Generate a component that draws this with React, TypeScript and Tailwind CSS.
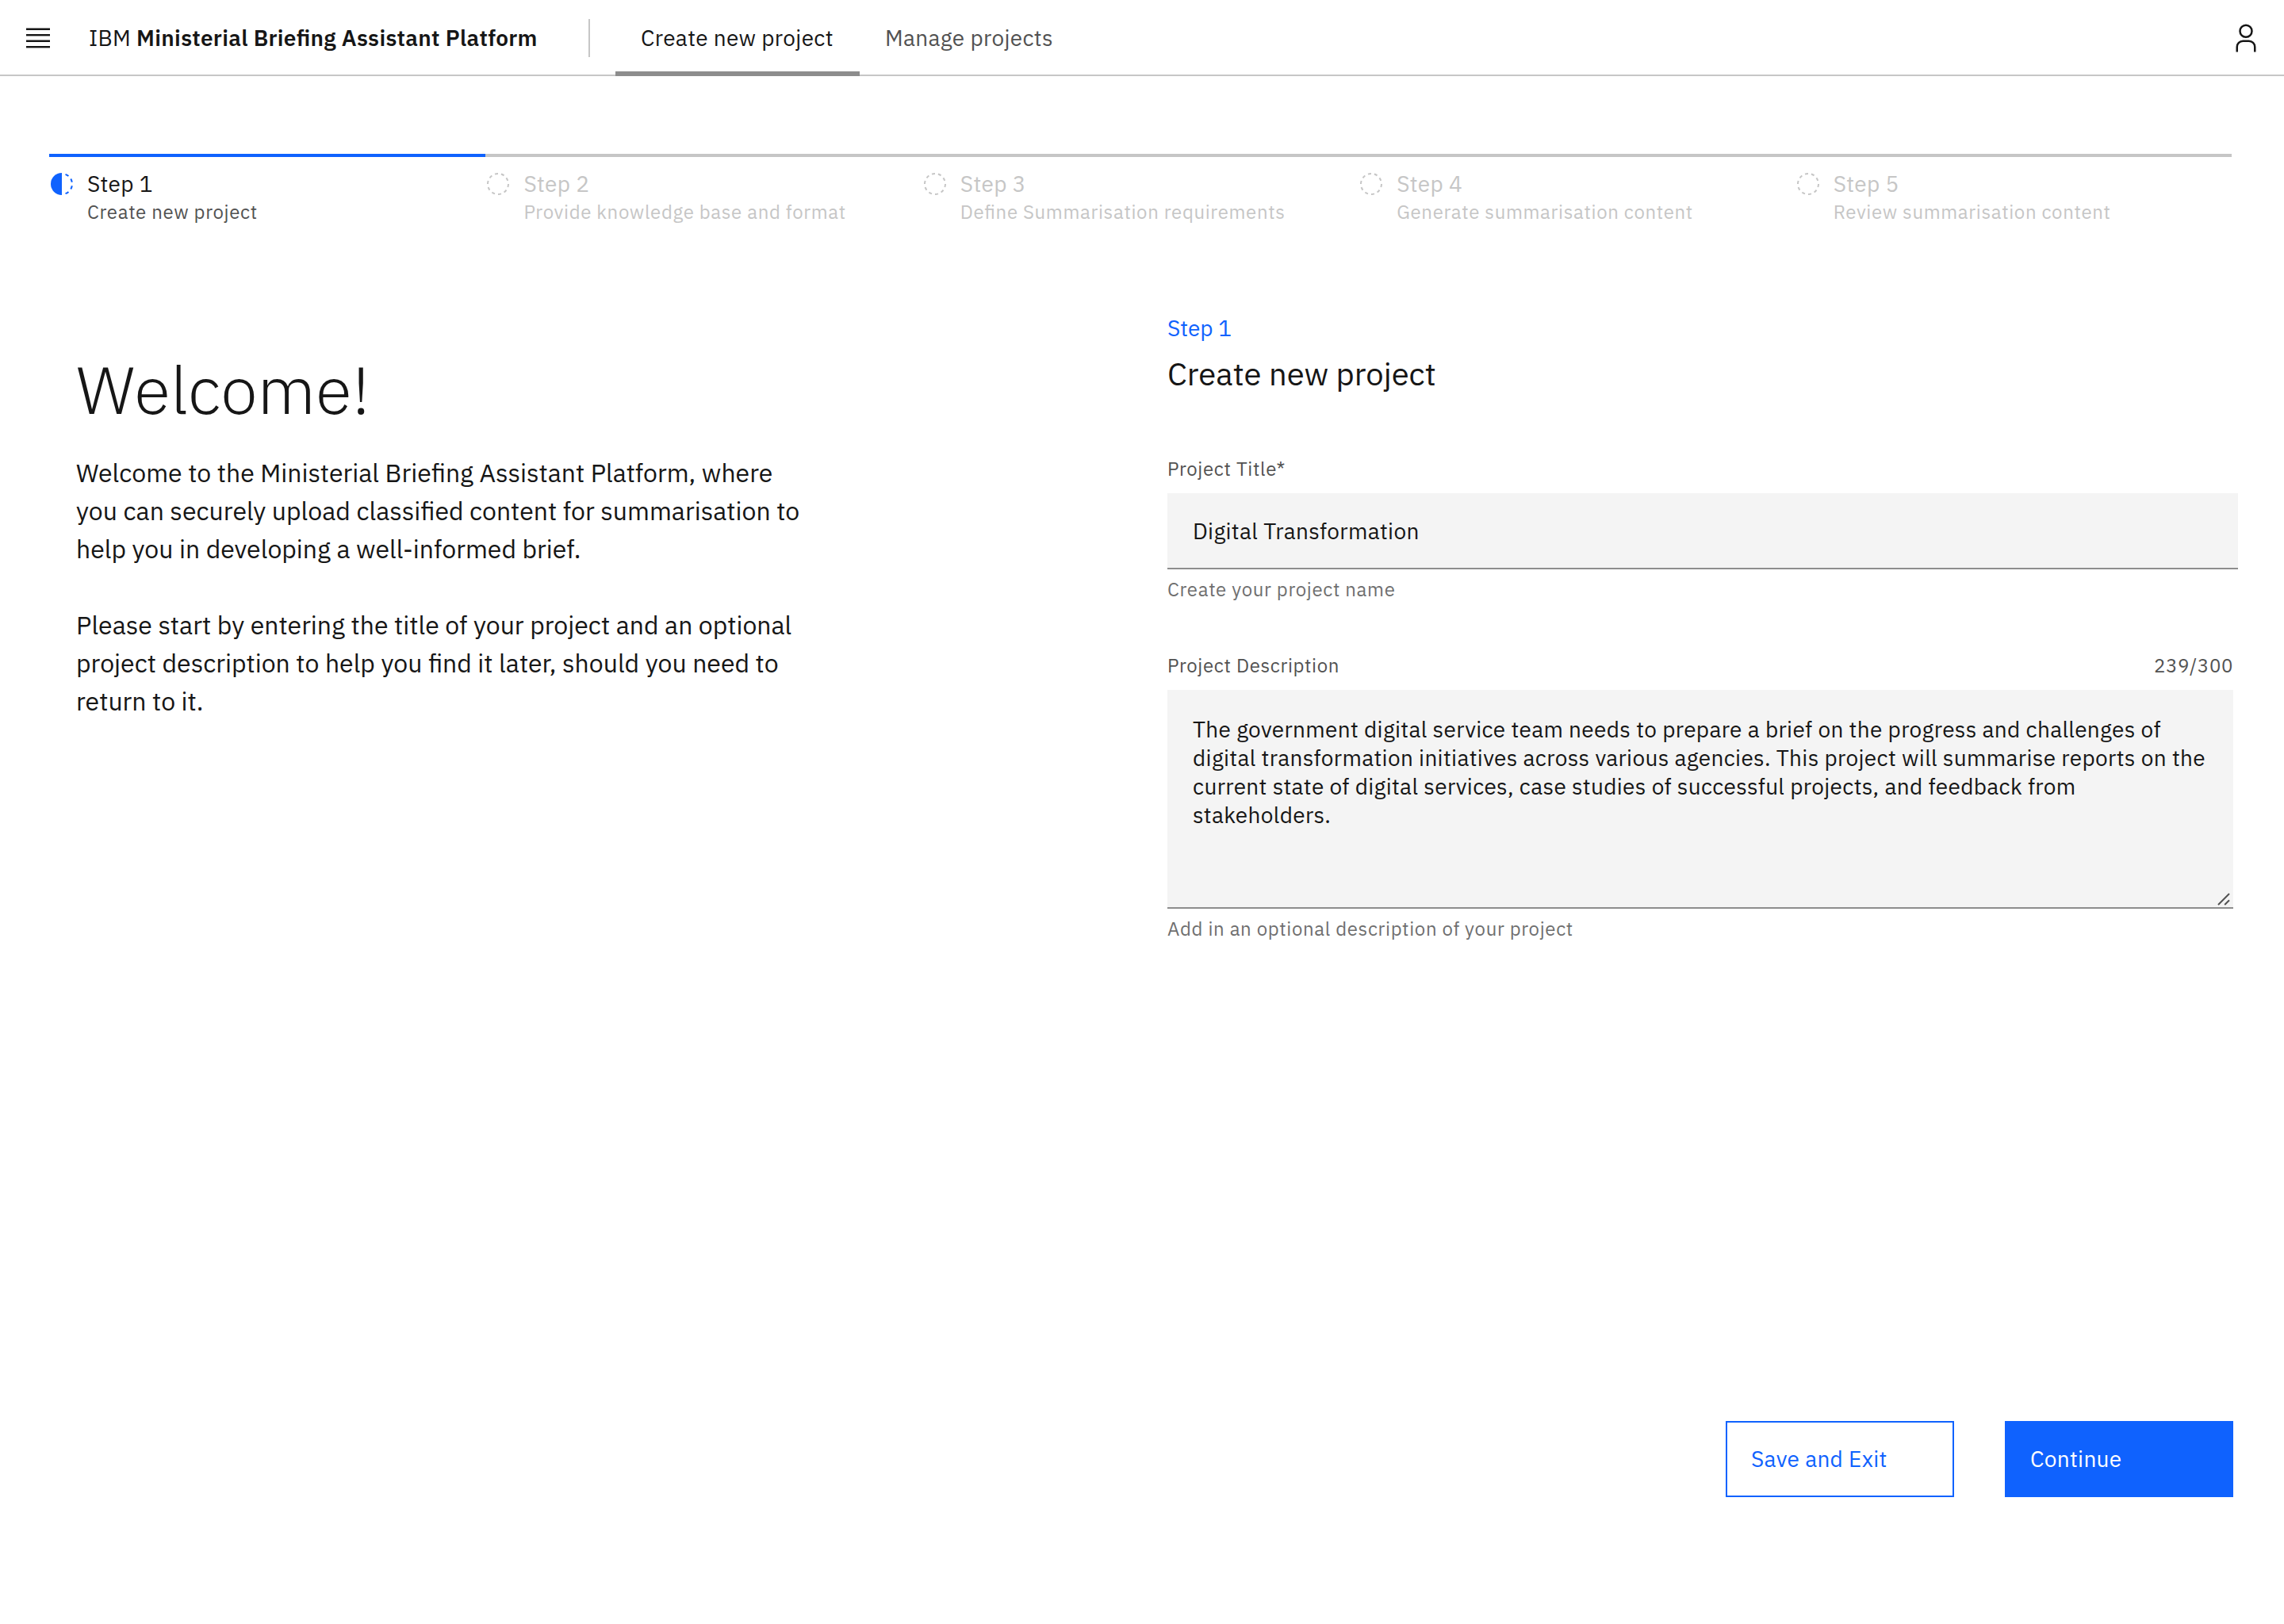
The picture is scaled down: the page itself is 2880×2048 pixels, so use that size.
const intro = [
  "Welcome to the Ministerial Briefing Assistant Platform, where",
  "you can securely upload classified content for summarisation to",
  "help you in developing a well-informed brief.",
];

const guidance = [
  "Please start by entering the title of your project and an optional",
  "project description to help you find it later, should you need to",
  "return to it.",
];

const description = [
  "The government digital service team needs to prepare a brief on the progress and challenges of",
  "digital transformation initiatives across various agencies. This project will summarise reports on the",
  "current state of digital services, case studies of successful projects, and feedback from",
  "stakeholders.",
];

const steps = [
  { label: "Step 1", detail: "Create new project" },
  { label: "Step 2", detail: "Provide knowledge base and format" },
  { label: "Step 3", detail: "Define Summarisation requirements" },
  { label: "Step 4", detail: "Generate summarisation content" },
  { label: "Step 5", detail: "Review summarisation content" },
];

function MenuIcon() {
  return (
    <svg width="30" height="26" viewBox="0 0 30 26" fill="#161616">
      <rect y="0.5" width="30" height="2.5" />
      <rect y="8" width="30" height="2.4" />
      <rect y="15.5" width="30" height="2.5" />
      <rect y="23" width="30" height="2.4" />
    </svg>
  );
}

function UserIcon() {
  return (
    <svg width="40" height="40" viewBox="0 0 32 32" fill="#161616">
      <path d="M16 4a5 5 0 1 1-5 5 5 5 0 0 1 5-5m0-2a7 7 0 1 0 7 7A7 7 0 0 0 16 2zM26 30H24V25a5 5 0 0 0-5-5H13a5 5 0 0 0-5 5v5H6V25a7 7 0 0 1 7-7h6a7 7 0 0 1 7 7z" />
    </svg>
  );
}

function IncompleteIcon() {
  return (
    <svg className="mt-0.5 shrink-0" width="32" height="32" viewBox="0 0 32 32" fill="#0f62fe">
      <path d="M23.7642 6.8593l1.2851-1.5315A13.976 13.976 0 0 0 20.8672 2.887l-.6836 1.8776A11.9729 11.9729 0 0 1 23.7642 6.8593z" />
      <path d="M27.81 14l1.9677-.4128A13.8888 13.8888 0 0 0 28.14 9.0457L26.4087 10A12.52 12.52 0 0 1 27.81 14z" />
      <path d="M20.1836 27.2354l.6836 1.8776a13.976 13.976 0 0 0 4.1821-2.4408l-1.2851-1.5315A11.9729 11.9729 0 0 1 20.1836 27.2354z" />
      <path d="M26.4087 22L28.14 23a14.14 14.14 0 0 0 1.6382-4.5872L27.81 18.0659A12.1519 12.1519 0 0 1 26.4087 22z" />
      <path d="M16 30V2a14 14 0 0 0 0 28z" />
    </svg>
  );
}

function CircleDashIcon() {
  return (
    <svg className="mt-0.5 shrink-0" width="32" height="32" viewBox="0 0 32 32" fill="#c6c6c6">
      <path d="M7.7 4.7a14.7 14.7 0 0 0-3 3.1L6.3 9A13.26 13.26 0 0 1 8.9 6.3z" />
      <path d="M4.6 12.3l-1.9-.6A12.51 12.51 0 0 0 2 16H4A11.48 11.48 0 0 1 4.6 12.3z" />
      <path d="M2.7 20.4a14.4 14.4 0 0 0 2 3.9l1.6-1.2a12.89 12.89 0 0 1-1.7-3.3z" />
      <path d="M7.8 27.3a14.4 14.4 0 0 0 3.9 2l.6-1.9A12.89 12.89 0 0 1 9 25.7z" />
      <path d="M11.7 2.7l.6 1.9A11.48 11.48 0 0 1 16 4V2A12.51 12.51 0 0 0 11.7 2.7z" />
      <path d="M24.2 27.3a15.18 15.18 0 0 0 3.1-3.1L25.7 23A11.53 11.53 0 0 1 23 25.7z" />
      <path d="M27.4 19.7l1.9.6A15.47 15.47 0 0 0 30 16H28A11.48 11.48 0 0 1 27.4 19.7z" />
      <path d="M29.2 11.6a14.4 14.4 0 0 0-2-3.9L25.6 8.9a12.89 12.89 0 0 1 1.7 3.3z" />
      <path d="M24.1 4.6a14.4 14.4 0 0 0-3.9-2l-.6 1.9a12.89 12.89 0 0 1 3.3 1.7z" />
      <path d="M20.3 29.3l-.6-1.9A11.48 11.48 0 0 1 16 28v2A21.42 21.42 0 0 0 20.3 29.3z" />
    </svg>
  );
}

function Lines({ lines }: { lines: string[] }) {
  return (
    <>
      {lines.map((line) => (
        <span key={line} className="block whitespace-nowrap">
          {line}
        </span>
      ))}
    </>
  );
}

function Header() {
  return (
    <header className="flex h-24 items-center pr-7 pl-[33px] text-[28px] leading-9 tracking-[0.32px] whitespace-nowrap shadow-[inset_0_-2px_0_#c6c6c6]">
      <MenuIcon />
      <div className="ml-[49px] w-[630px]">
        IBM <span className="font-semibold">Ministerial Briefing Assistant Platform</span>
      </div>
      <div className="h-12 w-0.5 bg-[#c6c6c6]" />
      <nav className="ml-8 flex h-24 flex-1">
        <a className="flex h-24 w-[308px] items-center pl-8 shadow-[inset_0_-6px_0_#8d8d8d]">Create new project</a>
        <a className="flex h-24 items-center px-8 text-[#525252]">Manage projects</a>
      </nav>
      <UserIcon />
    </header>
  );
}

function Progress() {
  return (
    <ol className="mt-[98px] ml-[62px] flex w-[2752px]">
      {steps.map((step, i) => (
        <li
          key={step.label}
          className={`flex flex-1 gap-4 border-t-4 pt-4 whitespace-nowrap ${i === 0 ? "border-[#0f62fe]" : "border-[#c6c6c6] text-[#c6c6c6]"}`}
        >
          {i === 0 ? <IncompleteIcon /> : <CircleDashIcon />}
          <div>
            <p className="text-[28px] leading-9 tracking-[0.32px]">{step.label}</p>
            <p className={`mt-px text-2xl leading-8 tracking-[0.64px] ${i === 0 ? "text-[#525252]" : ""}`}>{step.detail}</p>
          </div>
        </li>
      ))}
    </ol>
  );
}

export default function App() {
  return (
    <div className="h-[2048px] w-[2880px] overflow-hidden bg-white font-['IBM_Plex_Sans',Roboto,sans-serif] text-[#161616] [font-feature-settings:'liga'_1]">
      <Header />
      <Progress />
      <main className="flex pl-24">
        <section className="w-[1376px] pt-[158px]">
          <h1 className="text-[84px] leading-[100px] font-light">Welcome!</h1>
          <p className="mt-[31px] text-[32px] leading-[48px]">
            <Lines lines={intro} />
          </p>
          <p className="mt-12 text-[32px] leading-[48px]">
            <Lines lines={guidance} />
          </p>
        </section>

        <section className="w-[1350px] pt-[113px]">
          <p className="text-[28px] leading-9 text-[#0f62fe]">Step 1</p>
          <h2 className="mt-[11px] text-[40px] leading-[56px]">Create new project</h2>

          <div className="mt-[76px] text-2xl leading-8 tracking-[0.64px] text-[#525252]">Project Title*</div>
          <div className="mt-[15px] flex h-24 items-center bg-[#f4f4f4] pl-8 text-[28px] leading-9 tracking-[0.32px] shadow-[inset_0_-2px_0_#8d8d8d]">
            Digital Transformation
          </div>
          <p className="mt-[9px] text-2xl leading-8 tracking-[0.64px] text-[#6f6f6f]">Create your project name</p>

          <div className="w-[1344px]">
            <div className="mt-16 flex justify-between text-2xl leading-8 tracking-[0.64px] text-[#525252]">
              <span>Project Description</span>
              <span>239/300</span>
            </div>
            <div className="relative mt-[15px] h-[276px] bg-[#f4f4f4] pt-8 pl-8 text-[28px] leading-9 tracking-[0.32px] shadow-[inset_0_-2px_0_#8d8d8d]">
              <Lines lines={description} />
              <svg className="absolute right-1 bottom-1" width="16" height="16" viewBox="0 0 16 16" stroke="#525252" strokeWidth="2">
                <path d="M1 15L15 1M9.2 15L15 9.2" />
              </svg>
            </div>
            <p className="mt-[9px] text-2xl leading-8 tracking-[0.64px] text-[#6f6f6f]">Add in an optional description of your project</p>

            <div className="mt-[605px] flex justify-end gap-16 text-[28px] leading-9">
              <button className="h-24 w-72 border-2 border-[#0f62fe] pl-[30px] text-left tracking-[0.32px] text-[#0f62fe]">Save and Exit</button>
              <button className="h-24 w-72 bg-[#0f62fe] pl-8 text-left tracking-[0.32px] text-white">Continue</button>
            </div>
          </div>
        </section>
      </main>
    </div>
  );
}
